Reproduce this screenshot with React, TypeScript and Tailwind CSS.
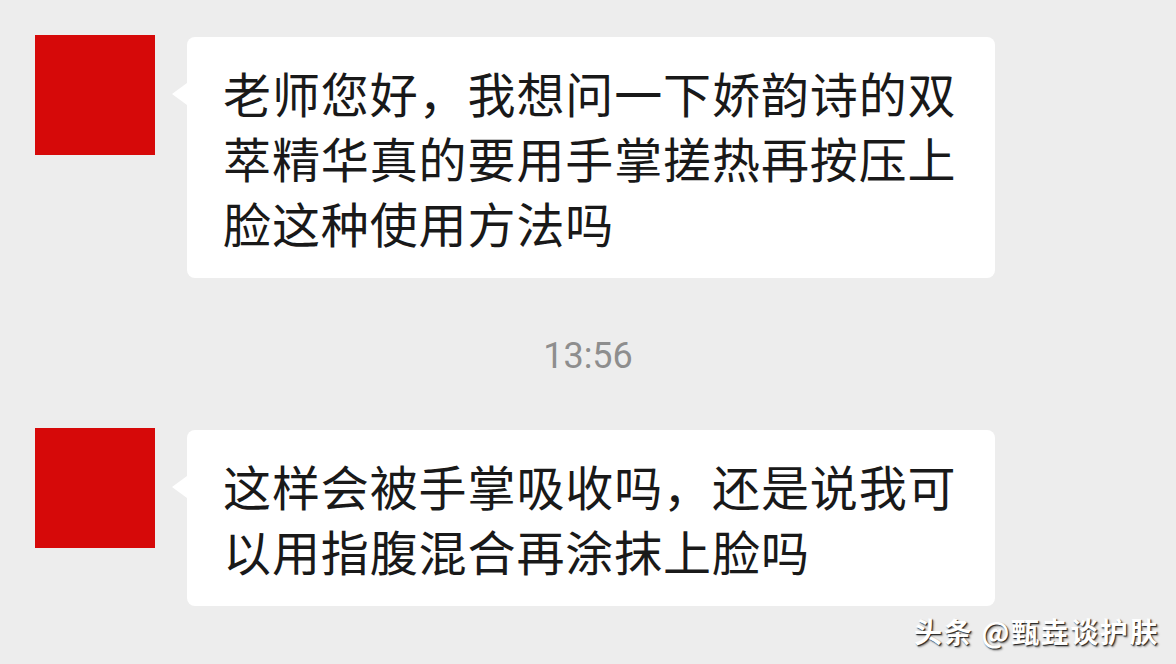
const CJK = "font-['Noto_Sans_CJK_SC','Noto_Sans',sans-serif]";

function Bubble({ lines }: { lines: string[] }) {
  return (
    <div className="relative mt-[2px] w-[808px] rounded-[8px] bg-white pl-[36px] pr-[20px] pt-[23px] pb-[23px]">
      {/* tail */}
      <div className="absolute left-[-15px] top-[46px] h-0 w-0 border-y-[11px] border-r-[15px] border-y-transparent border-r-white" />
      {lines.map((l) => (
        <div
          key={l}
          className={`${CJK} text-[48px] leading-[65px] tracking-[0.9px] text-[#191919] whitespace-nowrap`}
        >
          {l}
        </div>
      ))}
    </div>
  );
}

function Message({ lines }: { lines: string[] }) {
  return (
    <div className="flex items-start gap-[32px] pl-[35px]">
      <div className="h-[120px] w-[120px] shrink-0 bg-[#d60909]" />
      <Bubble lines={lines} />
    </div>
  );
}

export default function App() {
  return (
    <div className="relative flex h-[664px] w-[1176px] flex-col overflow-hidden bg-[#ededed] pt-[35px]">
      <Message
        lines={[
          "老师您好，我想问一下娇韵诗的双",
          "萃精华真的要用手掌搓热再按压上",
          "脸这种使用方法吗",
        ]}
      />

      <div className="mt-[58px] mb-[52px] text-center font-['Roboto',sans-serif] text-[36px] leading-[40px] text-[#8e8e8e]">
        13:56
      </div>

      <Message lines={["这样会被手掌吸收吗，还是说我可", "以用指腹混合再涂抹上脸吗"]} />

      {/* watermark */}
      <div
        className={`absolute right-[17px] bottom-[16px] ${CJK} text-[28px] leading-[34px] tracking-[1.6px] font-bold text-white [text-shadow:1px_1px_1px_#222,2px_2px_2px_rgba(0,0,0,0.35)]`}
      >
        头条 @甄垚谈护肤
      </div>
    </div>
  );
}
